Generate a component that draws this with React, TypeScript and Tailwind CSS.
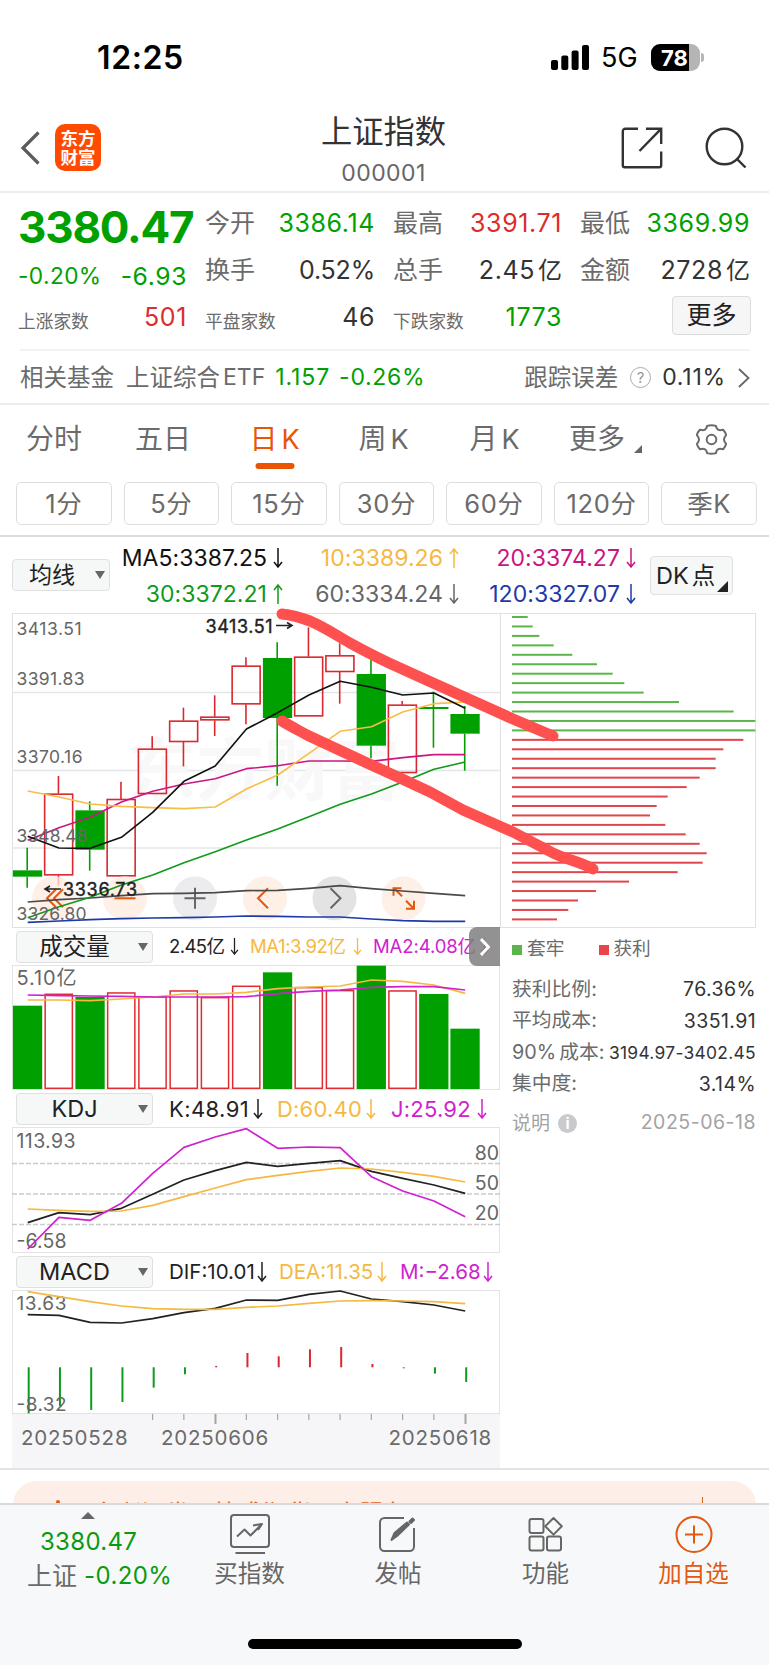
import React from "react";
import { clsx } from "clsx";

const GREEN = "#00a000";
const RED = "#d9282f";

// x centre of the candle with the given index, shared by all four charts
const cx = (i: number) => 15.7 + i * 31.25;

const points = (ys: number[]) => ys.map((y, i) => `${cx(i)},${y / 3}`).join(" ");

// open / close / wick levels, in thirds of a pixel from the chart's top edge
const candles = [
  { up: false, top: 772, bottom: 791, high: 704, low: 824 },
  { up: true, top: 542, bottom: 787, high: 489, low: 818 },
  { up: false, top: 592, bottom: 710, high: 565, low: 773 },
  { up: true, top: 558, bottom: 790, high: 506, low: 790 },
  { up: true, top: 407, bottom: 543, high: 370, low: 543 },
  { up: true, top: 323, bottom: 387, high: 284, low: 460 },
  { up: true, top: 311, bottom: 322, high: 247, low: 369 },
  { up: true, top: 158, bottom: 274, high: 133, low: 334 },
  { up: false, top: 135, bottom: 315, high: 88, low: 518 },
  { up: true, top: 131, bottom: 310, high: 43, low: 310 },
  { up: true, top: 127, bottom: 177, high: 91, low: 272 },
  { up: false, top: 183, bottom: 398, high: 141, low: 436 },
  { up: true, top: 275, bottom: 480, high: 264, low: 480 },
  { up: false, top: 282, bottom: 288, high: 236, low: 404 },
  { up: false, top: 303, bottom: 362, high: 279, low: 473 },
];

const averages = [
  { color: "#4a4a4a", ys: [867, 860, 855, 848, 842, 841, 839, 833, 832, 826, 818, 827, 834, 841, 848] },
  { color: "#1f3aa8", ys: [928, 924, 920, 917, 915, 914, 912, 909, 910, 912, 912, 918, 923, 925, 925] },
  { color: "#0f9a1c", ys: [914, 881, 853, 816, 786, 749, 716, 681, 648, 611, 574, 543, 507, 469, 447] },
  { color: "#cc1685", ys: [682, 644, 613, 567, 535, 513, 497, 467, 458, 444, 444, 445, 434, 425, 425] },
  { color: "#f9bd45", ys: [534, 552, 573, 580, 584, 587, 582, 528, 486, 421, 355, 341, 297, 272, 267] },
  { color: "#111111", ys: [670, 705, 706, 673, 598, 505, 459, 348, 299, 246, 205, 223, 246, 240, 286] },
];

const volumes = [
  { up: false, top: 122 },
  { up: true, top: 87 },
  { up: false, top: 96 },
  { up: true, top: 83 },
  { up: true, top: 95 },
  { up: true, top: 77 },
  { up: true, top: 97 },
  { up: true, top: 63 },
  { up: false, top: 22 },
  { up: true, top: 67 },
  { up: true, top: 76 },
  { up: false, top: 2 },
  { up: true, top: 77 },
  { up: false, top: 87 },
  { up: false, top: 191 },
];

const chips = [
  47, 62, 82, 125, 181, 255, 302, 337, 395, 501, 665, 730, 730, 694, 634, 611, 611, 563, 524, 467, 434, 414, 460, 521,
  563, 584, 572, 497, 351, 252, 198, 169, 135,
];

const macdBars = [138, 116, 128, 104, 61, 21, -4, -43, -33, -54, -61, -10, 3, 19, 44];

const Arrow = ({ up, className }: { up?: boolean; className?: string }) => (
  <svg viewBox="0 0 10 20" className={clsx("h-5 w-2.5 shrink-0", className)} fill="none" stroke="currentColor" strokeWidth="1.5">
    {up ? <path d="M5 20V1M1 6l4-5 4 5" /> : <path d="M5 0v19M1 14l4 5 4-5" />}
  </svg>
);

const StatusBar = () => (
  <div className="flex h-[96px] items-center justify-between pl-[97px] pr-[65px] pt-[19px]">
    <span className="text-[32px] font-semibold leading-none tracking-[0.6px] text-black">12:25</span>
    <div className="flex items-center">
      <svg viewBox="0 0 38 25" className="h-[25px] w-[38px]">
        <rect x="0" y="15" width="7" height="10" rx="2" />
        <rect x="10.3" y="10.5" width="7" height="14.5" rx="2" />
        <rect x="20.6" y="5.5" width="7" height="19.5" rx="2" />
        <rect x="31" y="0" width="7" height="25" rx="2" />
      </svg>
      <span className="ml-[12px] w-[38px] text-[27px] font-normal leading-none text-black">5G</span>
      <div className="ml-[12px] flex h-[27px] w-[49px] items-center overflow-hidden rounded-[9px] bg-[#b5b5b5]">
        <div className="flex h-full w-[38px] items-center justify-end bg-black pr-[1.5px] text-[22px] font-bold leading-none tracking-[-0.2px] text-white">
          78
        </div>
      </div>
      <div className="ml-[1px] h-[9px] w-[3px] rounded-r-full bg-[#b5b5b5]" />
    </div>
  </div>
);

const Header = () => (
  <header className="flex h-[97px] justify-between border-b-2 border-[#ececec] pl-[20px] pr-[22px]">
    <div className="flex w-[260px] pt-[28px]">
      <svg viewBox="0 0 20 34" className="mt-[7px] h-[34px] w-[20px]" fill="none" stroke="#5c5c5c" strokeWidth="3.2">
        <path d="M18.5 1.5 3 17l15.5 15.5" />
      </svg>
      <div className="ml-[15px] flex h-[47px] w-[46px] flex-col items-center justify-center rounded-[10px] bg-[#ff4a00] text-[17.5px] font-bold leading-[19px] text-white">
        <span>东方</span>
        <span>财富</span>
      </div>
    </div>
    <div className="flex flex-col items-center">
      <h1 className="mt-[16px] text-[31.3px] leading-[40px] text-[#333]">上证指数</h1>
      <span className="mt-[9px] text-[23px] leading-[24px] tracking-[0.4px] text-[#666]">000001</span>
    </div>
    <div className="flex w-[260px] justify-end pt-[31px]">
      <svg viewBox="0 0 42 42" className="h-[42px] w-[42px]" fill="none" stroke="#333" strokeWidth="2.4">
        <path d="M17 1.8H4.2A2.4 2.4 0 0 0 1.8 4.2v34a2 2 0 0 0 2 2H38.2a2 2 0 0 0 2-2V24.5M25 1.8h15.2V17M39.8 2.2 18.5 24" />
      </svg>
      <svg viewBox="0 0 42 42" className="ml-[42px] h-[42px] w-[42px]" fill="none" stroke="#333" strokeWidth="2.4">
        <circle cx="19.5" cy="19.5" r="17.8" />
        <path d="m31.5 31.5 9 9" />
      </svg>
    </div>
  </header>
);

const Cell = ({ label, value, unit, color, small }: { label: string; value: string; unit?: string; color: string; small?: boolean }) => (
  <div className="flex items-center justify-between">
    <span className={clsx("leading-none text-[#6b6b6b]", small ? "pt-[9px] text-[17.7px]" : "text-[25px]")}>{label}</span>
    <span
      className={clsx("flex items-center text-[25px] leading-none", value.includes("%") ? "tracking-[-0.2px]" : "tracking-[0.6px]", color)}
    >
      {value}
      {unit && <span className="ml-[3px] text-[24px] tracking-normal">{unit}</span>}
    </span>
  </div>
);

const Quote = () => (
  <section className="h-[212px] border-b-2 border-[#ececec] pt-[7px]">
    <div className="grid grid-cols-[169px_170px_169px_170px] grid-rows-[47px_47px_47px] gap-x-[18px] pl-[18px]">
      <div className="whitespace-nowrap pt-[5px] text-[44px] font-bold leading-[44px] tracking-[-1.2px] text-[#00a000]">3380.47</div>
      <Cell label="今开" value="3386.14" color="text-[#00a000]" />
      <Cell label="最高" value="3391.71" color="text-[#e02b2b]" />
      <Cell label="最低" value="3369.99" color="text-[#00a000]" />
      <div className="flex items-center justify-between pt-[12px] leading-none text-[#00a000]">
        <span className="text-[22.7px] tracking-[0.4px]">-0.20%</span>
        <span className="text-[24.7px] tracking-[0.6px]">-6.93</span>
      </div>
      <Cell label="换手" value="0.52%" color="text-[#333]" />
      <Cell label="总手" value="2.45" unit="亿" color="text-[#333]" />
      <Cell label="金额" value="2728" unit="亿" color="text-[#333]" />
      <Cell label="上涨家数" value="501" color="text-[#e02b2b]" small />
      <Cell label="平盘家数" value="46" color="text-[#333]" small />
      <Cell label="下跌家数" value="1773" color="text-[#00a000]" small />
      <div className="-mr-px flex justify-end pt-[2px]">
        <button className="flex h-[39px] w-[79px] items-center justify-center rounded-[4px] border border-[#dcdcdc] bg-[#f6f6f7] text-[25px] leading-none text-[#222]">
          更多
        </button>
      </div>
    </div>
    <div className="ml-[20px] mr-[19px] mt-[8px] flex h-[55px] items-center border-t-2 border-[#f2f2f2] text-[23.5px] leading-none text-[#6b6b6b]">
      <span>相关基金</span>
      <span className="ml-[12px]">上证综合</span>
      <span className="ml-[3px] text-[23px]">ETF</span>
      <span className="ml-[10px] text-[23px] tracking-[0.9px] text-[#00a000]">1.157</span>
      <span className="ml-[9px] text-[23px] tracking-[0.7px] text-[#00a000]">-0.26%</span>
      <span className="ml-auto">跟踪误差</span>
      <span className="ml-[12px] flex size-[21px] items-center justify-center rounded-full border-[1.5px] border-[#aaa] text-[15px] text-[#999]">?</span>
      <span className="ml-[11px] text-[23px] tracking-[0.8px] text-[#333]">0.11%</span>
      <svg viewBox="0 0 12 20" className="ml-[12px] h-[20px] w-[12px]" fill="none" stroke="#666" strokeWidth="1.8">
        <path d="m1 1 9.5 9L1 19" />
      </svg>
    </div>
  </section>
);

const tabs = [
  { label: "分时", width: "w-[108px]" },
  { label: "五日", width: "w-[110px]" },
  { label: "日K", width: "w-[113px]", active: true },
  { label: "周K", width: "w-[105px]" },
  { label: "月K", width: "w-[117px]" },
];

const periods = ["1分", "5分", "15分", "30分", "60分", "120分", "季K"];

const gearPath =
  "M15.5 1.2c1.6 0 3 .2 4.4.7.4 2.2 1.5 3.8 3.2 4.2 1.5.3 2.7 0 4-.3 1.5 1.5 2.5 3.3 3 5.3-1.4 1.5-2.1 2.8-2.1 4.4s.7 2.9 2.1 4.4c-.5 2-1.5 3.8-3 5.3-1.3-.3-2.5-.6-4-.3-1.7.4-2.8 2-3.2 4.2-2.9.9-5.9.9-8.8 0-.4-2.2-1.5-3.8-3.2-4.2-1.5-.3-2.7 0-4 .3-1.5-1.5-2.5-3.3-3-5.3C2.3 18.4 3 17.1 3 15.5s-.7-2.9-2.1-4.4c.5-2 1.5-3.8 3-5.3 1.3.3 2.5.6 4 .3 1.7-.4 2.8-2 3.2-4.2 1.4-.5 2.8-.7 4.4-.7Z";

const Periods = () => (
  <section className="h-[132px] border-b-2 border-[#dcdcdc]">
    <div className="flex h-[67px] items-center pt-px text-[28px] leading-none text-[#6b6b6b]">
      {tabs.map((tab) => (
        <div key={tab.label} className={clsx("relative flex h-full items-center justify-center", tab.width, tab.active && "text-[#ea5504]")}>
          {tab.label.replace("K", "")}
          {tab.label.includes("K") && <span className="ml-[4px] text-[27px]">K</span>}
          {tab.active && <span className="absolute bottom-[3px] left-1/2 h-[6px] w-[39px] -translate-x-1/2 rounded-full bg-[#ea5504]" />}
        </div>
      ))}
      <div className="ml-[16px] flex items-end">
        更多
        <svg viewBox="0 0 8 8" className="ml-[9px] size-[8px]" fill="#666">
          <path d="M8 0v8H0z" />
        </svg>
      </div>
      <svg viewBox="0 0 31 31" className="ml-[54px] size-[31px]" fill="none" stroke="#6b6b6b" strokeWidth="2">
        <path d={gearPath} />
        <circle cx="15.5" cy="15.5" r="4.8" />
      </svg>
    </div>
    <div className="ml-[16px] mt-[10px] grid w-[741px] grid-cols-7 gap-[12px]">
      {periods.map((period) => (
        <button key={period} className="h-[43px] rounded-[5px] border-[1.5px] border-[#dedede] pt-px text-[25.5px] leading-none tracking-[0.7px] text-[#6b6b6b]">
          {period}
        </button>
      ))}
    </div>
  </section>
);

const Average = ({ text, up, color }: { text: string; up?: boolean; color: string }) => (
  <div className={clsx("flex items-center justify-end text-[23px] leading-none tracking-[0.05px]", color)}>
    {text}
    <Arrow up={up} className="ml-[6px]" />
  </div>
);

const AverageBar = () => (
  <div className="flex h-[76px] pl-[12px]">
    <button className="mt-[22px] flex h-[32px] w-[98px] items-center rounded-[4px] border border-[#e0e0e0] bg-[#f6f7f7] pl-[16px] text-[23px] leading-none text-[#222]">
      均线
      <span className="ml-[20px] border-x-[5px] border-t-[8px] border-x-transparent border-t-[#666]" />
    </button>
    <div className="grid h-[75px] w-[526px] grid-cols-[173px_176px_177px] grid-rows-2 pt-[3px]">
      <Average text="MA5:3387.25" color="text-[#111]" />
      <Average text="10:3389.26" up color="text-[#f5b942]" />
      <Average text="20:3374.27" color="text-[#c9157f]" />
      <Average text="30:3372.21" up color="text-[#0f9a1c]" />
      <Average text="60:3334.24" color="text-[#666]" />
      <Average text="120:3327.07" color="text-[#1f3aa8]" />
    </div>
    <button className="ml-[14px] mt-[19px] flex h-[39px] w-[83px] items-center rounded-[4px] border border-[#e0e0e0] bg-[#f6f7f7] pl-[5px] text-[23.5px] leading-none text-[#222]">
      DK<span className="ml-[3px]">点</span>
      <svg viewBox="0 0 11 11" className="mb-[2px] ml-[2px] size-[11px] shrink-0 self-end" fill="#222">
        <path d="M11 0v11H0z" />
      </svg>
    </button>
  </div>
);

const ToolButton = ({ x, warm, fill, children }: { x: number; warm?: boolean; fill?: string; children: React.ReactNode }) => (
  <g transform={`translate(${x} 285.3)`} fill="none" stroke={warm ? "#e2590f" : "#666"} strokeWidth="2">
    <circle r="22" fill={fill ?? "#fde9df"} fillOpacity="0.75" stroke="none" />
    {children}
  </g>
);

const CandleChart = () => (
  <div className="h-[315px] w-[488px] border border-r-0 border-[#dfe1e4]">
    <svg viewBox="0 0 488 314" className="-ml-px -mt-px h-[314px] w-[488px]">
      {[79.5, 157.5, 235].map((y) => (
        <line key={y} x2="488" y1={y} y2={y} stroke="#e3e6e9" strokeWidth="1.5" />
      ))}
      <text x="116" y="182" fontSize="68" fontWeight="700" fill="#f8f8f9" textLength="272">
        东方财富
      </text>
      {candles.map((c, i) => {
        const color = c.up ? RED : GREEN;
        const top = c.top / 3;
        const height = (c.bottom - c.top) / 3;
        return (
          <g key={i} stroke={color} strokeWidth="1.6">
            <line x1={cx(i) - 0.5} x2={cx(i) - 0.5} y1={c.high / 3} y2={top} />
            <line x1={cx(i) - 0.5} x2={cx(i) - 0.5} y1={top + height} y2={c.low / 3} />
            {c.up ? (
              <rect x={cx(i) - 14.3} y={top + 0.5} width="28" height={height - 1} fill="none" />
            ) : (
              <rect x={cx(i) - 14.8} y={top} width="29.3" height={height} fill={color} stroke="none" />
            )}
          </g>
        );
      })}
      <ToolButton x={42} warm>
        <path d="M2-9-7 0l9 9M9-9 0 0l9 9" />
      </ToolButton>
      <ToolButton x={113} warm>
        <path d="M-10.5 0h21" />
      </ToolButton>
      <ToolButton x={183} fill="#e6e6ea">
        <path d="M-10.5 0h21M0-10.5v21" />
      </ToolButton>
      <ToolButton x={253} warm>
        <path d="M3-10-7 0 3 10" />
      </ToolButton>
      <ToolButton x={322.5} fill="#dadadb">
        <path d="M-4-10 6 0-4 10" />
      </ToolButton>
      <ToolButton x={391.5} warm>
        <path d="M-1.5-2-10-10.5M-10-2.5V-10H-2M2.5 2.5l8 8M10.5 2.5v8h-8" />
      </ToolButton>
      {averages.map((line) => (
        <polyline key={line.color} points={points(line.ys)} fill="none" stroke={line.color} strokeWidth="1.6" strokeLinejoin="round" />
      ))}
      <g fontSize="17.5" fill="#666">
        <text x="4.5" y="21.5" textLength="65">
          3413.51
        </text>
        <text x="4.5" y="72" textLength="68">
          3391.83
        </text>
        <text x="4.5" y="150" textLength="66">
          3370.16
        </text>
        <text x="4.5" y="228.5" textLength="71">
          3348.48
        </text>
        <text x="4.5" y="306.5" textLength="70">
          3326.80
        </text>
      </g>
      <g fontSize="18" fill="#222" stroke="#222" strokeWidth="0.4">
        <text x="193.5" y="19.5" textLength="67">
          3413.51
        </text>
        <text x="51" y="283" textLength="74">
          3336.73
        </text>
      </g>
      <path d="M264 12.5h15M275 9.5l5 3-5 3M49 276H34M38 273l-5 3 5 3" fill="none" stroke="#222" strokeWidth="1.6" />
    </svg>
  </div>
);

const ChipChart = () => (
  <div className="h-[315px] w-[256px] border border-[#dfe1e4]">
    <svg viewBox="0 0 256 314" className="-ml-px -mt-px h-[314px] w-[256px]">
      {chips.map((width, i) => (
        <rect key={i} x="12" y={3 + i * 9.45} width={width / 3} height="2" fill={i < 13 ? "#5cb54a" : "#e0474c"} />
      ))}
    </svg>
  </div>
);

// two freehand trend strokes drawn across both charts
const TrendStrokes = () => (
  <svg viewBox="0 0 744 314" className="pointer-events-none absolute left-0 top-0 h-[314px] w-[744px] overflow-visible">
    <g fill="none" stroke="#ff5050" strokeWidth="11" strokeLinecap="round" strokeLinejoin="round">
      <path d="M270 1c10 1 20 4 28 7 16 7 24 13 40 22 20 11 34 18 50 25l22 10 40 18 51 23 40 17" />
      <path d="M270 108c8 5 16 9 25 14l60 28 33 15 30 14 33 18 50 22 40 21c14 7 28 9 40 16" />
    </g>
  </svg>
);

const IndicatorButton = ({ label }: { label: string }) => (
  <button className="ml-[4px] flex h-[32px] w-[137px] shrink-0 items-center rounded-[4px] border border-[#e0e0e0] bg-[#f6f7f7] text-[23.5px] leading-none text-[#222]">
    <span className="w-[115px] text-center">{label}</span>
    <span className="ml-[6px] border-x-[5px] border-t-[8px] border-x-transparent border-t-[#666]" />
  </button>
);

const Frame = ({ children, className }: { children: React.ReactNode; className: string }) => (
  <div className={clsx("w-[488px] border border-[#e1e3e6]", className)}>
    <svg viewBox="0 0 488 124" className="-ml-px -mt-px h-[124px] w-[488px]">
      {children}
    </svg>
  </div>
);

const Volume = () => (
  <>
    <div className="relative flex h-[37px] items-center text-[18.5px] leading-none">
      <IndicatorButton label="成交量" />
      <span className="ml-[16px] w-[55px] whitespace-nowrap tracking-[-0.6px] text-[#222]">2.45亿</span>
      <Arrow className="ml-[6px] h-[17px] w-[9px] text-[#222]" />
      <span className="ml-[11px] w-[98px] whitespace-nowrap tracking-[-0.4px] text-[#f5b942]">MA1:3.92亿</span>
      <Arrow className="ml-[5px] h-[17px] w-[9px] text-[#f5b942]" />
      <span className="ml-[11px] w-[100px] whitespace-nowrap tracking-[-0.1px] text-[#cf22cf]">MA2:4.08亿</span>
      <Arrow className="ml-[7px] h-[17px] w-[9px] text-[#cf22cf]" />
      <div className="absolute -top-px right-0 flex h-[39px] w-[31px] items-center justify-center rounded-l-[8px] bg-[#7f7f7f]/85">
        <svg viewBox="0 0 10 18" className="h-[18px] w-[10px]" fill="none" stroke="#fff" strokeWidth="3">
          <path d="m1 1 7.5 8L1 17" />
        </svg>
      </div>
    </div>
    <Frame className="h-[125px]">
      <text x="4.5" y="20" fontSize="20" fill="#666" textLength="60">
        5.10亿
      </text>
      {volumes.map((v, i) =>
        v.up ? (
          <rect key={i} x={cx(i) - 13.8} y={v.top / 3 + 0.3} width="27.2" height={123 - v.top / 3} fill="#fff" stroke="#e02b2f" strokeWidth="1.5" />
        ) : (
          <rect key={i} x={cx(i) - 14.8} y={v.top / 3} width="29.3" height={124 - v.top / 3} fill={GREEN} />
        )
      )}
      <g fill="none" strokeWidth="1.7" strokeLinejoin="round">
        <polyline stroke="#f5b942" points={points([105, 105, 107, 102, 96, 87, 87, 82, 71, 66, 63, 45, 49, 60, 85])} />
        <polyline stroke="#cf22cf" points={points([90, 92, 93, 94, 96, 96, 96, 95, 86, 79, 75, 67, 65, 65, 75])} />
      </g>
    </Frame>
  </>
);

const Kdj = () => (
  <>
    <div className="flex h-[37px] items-center pt-px text-[22px] leading-none">
      <IndicatorButton label="KDJ" />
      <span className="ml-[16px] w-[77px] whitespace-nowrap tracking-[0.4px] text-[#222]">K:48.91</span>
      <Arrow className="ml-[7px] text-[#222]" />
      <span className="ml-[14px] w-[83px] whitespace-nowrap tracking-[0.2px] text-[#f5b942]">D:60.40</span>
      <Arrow className="ml-[6px] text-[#f5b942]" />
      <span className="ml-[15px] w-[79px] whitespace-nowrap tracking-[0.2px] text-[#cf22cf]">J:25.92</span>
      <Arrow className="ml-[7px] text-[#cf22cf]" />
    </div>
    <Frame className="h-[126px]">
      {[36.5, 67, 97.5].map((y) => (
        <line key={y} x2="488" y1={y} y2={y} stroke="#c9cbcd" strokeWidth="1.4" strokeDasharray="5 2" />
      ))}
      <g fontSize="19.5" fill="#666">
        <text x="4.5" y="20.5" textLength="59">
          113.93
        </text>
        <text x="4.5" y="120.5" textLength="50">
          -6.58
        </text>
        <g textAnchor="end">
          <text x="487" y="32.5">80</text>
          <text x="487" y="63">50</text>
          <text x="487" y="93">20</text>
        </g>
      </g>
      <g fill="none" strokeWidth="1.7" strokeLinejoin="round">
        <polyline stroke="#222" points={points([287, 257, 263, 244, 202, 159, 131, 106, 118, 109, 101, 133, 154, 174, 199])} />
        <polyline stroke="#f5b942" points={points([246, 250, 253, 252, 235, 209, 183, 158, 145, 133, 123, 126, 136, 148, 165])} />
        <polyline stroke="#cf22cf" points={points([366, 271, 280, 229, 139, 61, 30, 5, 64, 60, 62, 149, 192, 222, 269])} />
      </g>
    </Frame>
  </>
);

const Macd = () => (
  <>
    <div className="flex h-[37px] items-center pt-px text-[20.5px] leading-none">
      <IndicatorButton label="MACD" />
      <span className="ml-[16px] w-[82px] whitespace-nowrap text-[#222]">DIF:10.01</span>
      <Arrow className="ml-[6px] text-[#222]" />
      <span className="ml-[12px] w-[92px] whitespace-nowrap text-[#f5b942]">DEA:11.35</span>
      <Arrow className="ml-[6px] text-[#f5b942]" />
      <span className="ml-[13px] w-[78px] whitespace-nowrap text-[#cf22cf]">M:−2.68</span>
      <Arrow className="ml-[5px] text-[#cf22cf]" />
    </div>
    <Frame className="h-[124px]">
      {macdBars.map((value, i) => (
        <rect
          key={i}
          x={cx(i)}
          y={value > 0 ? 77.3 : 77.3 + value / 3}
          width="2"
          height={Math.abs(value) / 3}
          fill={value > 0 ? "#0f9a1c" : RED}
        />
      ))}
      <g fontSize="19" fill="#666">
        <text x="4.5" y="20" textLength="50">
          13.63
        </text>
        <text x="4.5" y="120.5" textLength="50">
          -8.32
        </text>
      </g>
      <g fill="none" strokeWidth="1.7" strokeLinejoin="round">
        <polyline stroke="#222" points={points([74, 76, 97, 99, 86, 68, 55, 30, 31, 13, 3, 27, 35, 45, 63])} />
        <polyline stroke="#f5b942" points={points([5, 20, 35, 48, 56, 58, 58, 52, 48, 40, 33, 32, 33, 35, 41])} />
      </g>
    </Frame>
    <div className="h-[54px] w-[488px] bg-[#f6f6f8]">
      <svg viewBox="0 0 488 11" className="h-[11px] w-[488px]" fill="#a5a5a5">
        {Array.from({ length: 11 }, (_, n) => n + 4).map((i) => {
          const major = i === 6 || i === 14;
          return <rect key={i} x={cx(i) - 0.7} width={major ? 2 : 1.2} height={major ? 10 : 6} />;
        })}
      </svg>
      <div className="flex text-[20.5px] leading-[25px] tracking-[0.8px] text-[#6b6b6b]">
        <span className="ml-[9px] w-[140px]">20250528</span>
        <span>20250606</span>
        <span className="ml-auto mr-[8px]">20250618</span>
      </div>
    </div>
  </>
);

const CostRow = ({ label, value, small }: { label: React.ReactNode; value: string; small?: boolean }) => (
  <div className="flex h-[31.5px] items-center justify-between">
    <span className="text-[19.8px] text-[#6b6b6b]">{label}</span>
    <span className={clsx("text-[#333]", small ? "text-[17.4px] tracking-[0.3px]" : "text-[19.5px] tracking-[0.4px]")}>{value}</span>
  </div>
);

const CostPanel = () => (
  <aside className="w-[257px] pl-[12px] pr-px leading-none">
    <div className="flex h-[43px] items-center text-[18.7px] text-[#6b6b6b]">
      <span className="mr-[5px] size-[10px] bg-[#5cb54a]" />
      套牢
      <span className="ml-[35px] mr-[4px] size-[10px] bg-[#e8454a]" />
      获利
    </div>
    <div className="pt-[3px]">
      <CostRow label="获利比例:" value="76.36%" />
      <CostRow label="平均成本:" value="3351.91" />
      <CostRow
        label={
          <>
            90%<span className="ml-[3px]">成本:</span>
          </>
        }
        value="3194.97-3402.45"
        small
      />
      <CostRow label="集中度:" value="3.14%" />
    </div>
    <div className="mt-[8px] flex h-[30px] items-center text-[19px] text-[#a3a3a3]">
      说明
      <span className="ml-[8px] flex size-[19px] items-center justify-center rounded-full bg-[#cacacc] text-[15px] font-bold text-white">i</span>
      <span className="ml-auto text-[19.5px] tracking-[0.5px]">2025-06-18</span>
    </div>
  </aside>
);

const Promo = () => (
  <section className="h-[35px] border-t-2 border-[#e3e3e3] pt-[11px]">
    <div className="mx-[13px] flex h-[60px] rounded-[24px] bg-[#fdeee7] text-[24.2px] leading-[30px] text-[#d9621f]">
      <span className="ml-[43px] mt-[19px] h-[6px] w-[4px] rounded-t-full bg-[#d9621f]" />
      <span className="ml-[33px] mt-[18px]">东兴证券，快惑期货开户服务</span>
      <span className="ml-auto mr-[53px] mt-[16px] h-[8px] w-[1.5px] bg-[#d9621f]" />
    </div>
  </section>
);

const NavItem = ({ label, width, active, children }: { label: string; width: string; active?: boolean; children: React.ReactNode }) => (
  <div className={clsx("flex flex-col items-center pt-[9px]", width, active ? "text-[#e2590f]" : "text-[#666]")}>
    <svg viewBox="0 0 42 42" className="size-[42px]" fill="none" stroke="currentColor" strokeWidth="2" strokeLinejoin="round">
      {children}
    </svg>
    <span className="mt-[5px] text-[23.5px] leading-[26px]">{label}</span>
  </div>
);

const BottomNav = () => (
  <nav className="relative flex h-[162px] border-t-2 border-[#d8dadd] bg-[#f7f8f9]">
    <div className="w-[175px] leading-none text-[#0a9a10]">
      <div className="ml-[81px] mt-[7px] h-0 w-[14px] border-x-[7px] border-b-[7px] border-x-transparent border-b-[#666]" />
      <div className="ml-[40px] mt-[10px] text-[24px] leading-[26px] tracking-[0.3px]">3380.47</div>
      <div className="ml-[27px] mt-[8px] flex items-center text-[24px] leading-[26px]">
        <span className="text-[25px] text-[#6b6b6b]">上证</span>
        <span className="ml-[7px] tracking-[0.4px]">-0.20%</span>
      </div>
    </div>
    <NavItem label="买指数" width="w-[149px]">
      <rect x="2" y="1" width="38" height="32" rx="3" />
      <path d="M8 22.5l7.5-7 6 6L32 11M24 11.5l9-1.5-4 6M6.5 39h29.5" />
    </NavItem>
    <NavItem label="发帖" width="w-[148px]">
      <path d="M27 4H7.500A4.500 4.500 0 0 0 3 8.500v24A4.500 4.500 0 0 0 7.500 37h25a4.500 4.500 0 0 0 4.500-4.500V14" />
      <path d="m14.500 26 3-7L30 8.500l2 2L20 22zM32.500 7.500l3-3 1.500 1.500-3 3z" fill="currentColor" />
    </NavItem>
    <NavItem label="功能" width="w-[147px]">
      <rect x="4.5" y="5" width="14" height="14" rx="2" />
      <rect x="4.5" y="22.5" width="14" height="14" rx="2" />
      <rect x="22" y="22.5" width="14" height="14" rx="2" />
      <path d="m28.500 4 8.300 8.300-8.300 8.300-8.300-8.300z" />
    </NavItem>
    <NavItem label="加自选" width="w-[149px]" active>
      <circle cx="21" cy="20.5" r="17.5" />
      <path d="M12 20.5h18M21 11.5v18" />
    </NavItem>
    <div className="absolute bottom-[16px] left-[248px] h-[10px] w-[274px] rounded-full bg-black" />
  </nav>
);

export default function App() {
  return (
    <div className="h-[1665px] w-[769px] overflow-hidden bg-white font-['Inter','Noto_Sans_CJK_SC',sans-serif] font-[385]">
      <StatusBar />
      <Header />
      <Quote />
      <Periods />
      <AverageBar />
      <div className="relative ml-[12px] flex w-[744px]">
        <CandleChart />
        <ChipChart />
        <TrendStrokes />
      </div>
      <div className="ml-[12px] flex h-[540px]">
        <div className="w-[488px]">
          <Volume />
          <Kdj />
          <Macd />
        </div>
        <CostPanel />
      </div>
      <Promo />
      <BottomNav />
    </div>
  );
}
